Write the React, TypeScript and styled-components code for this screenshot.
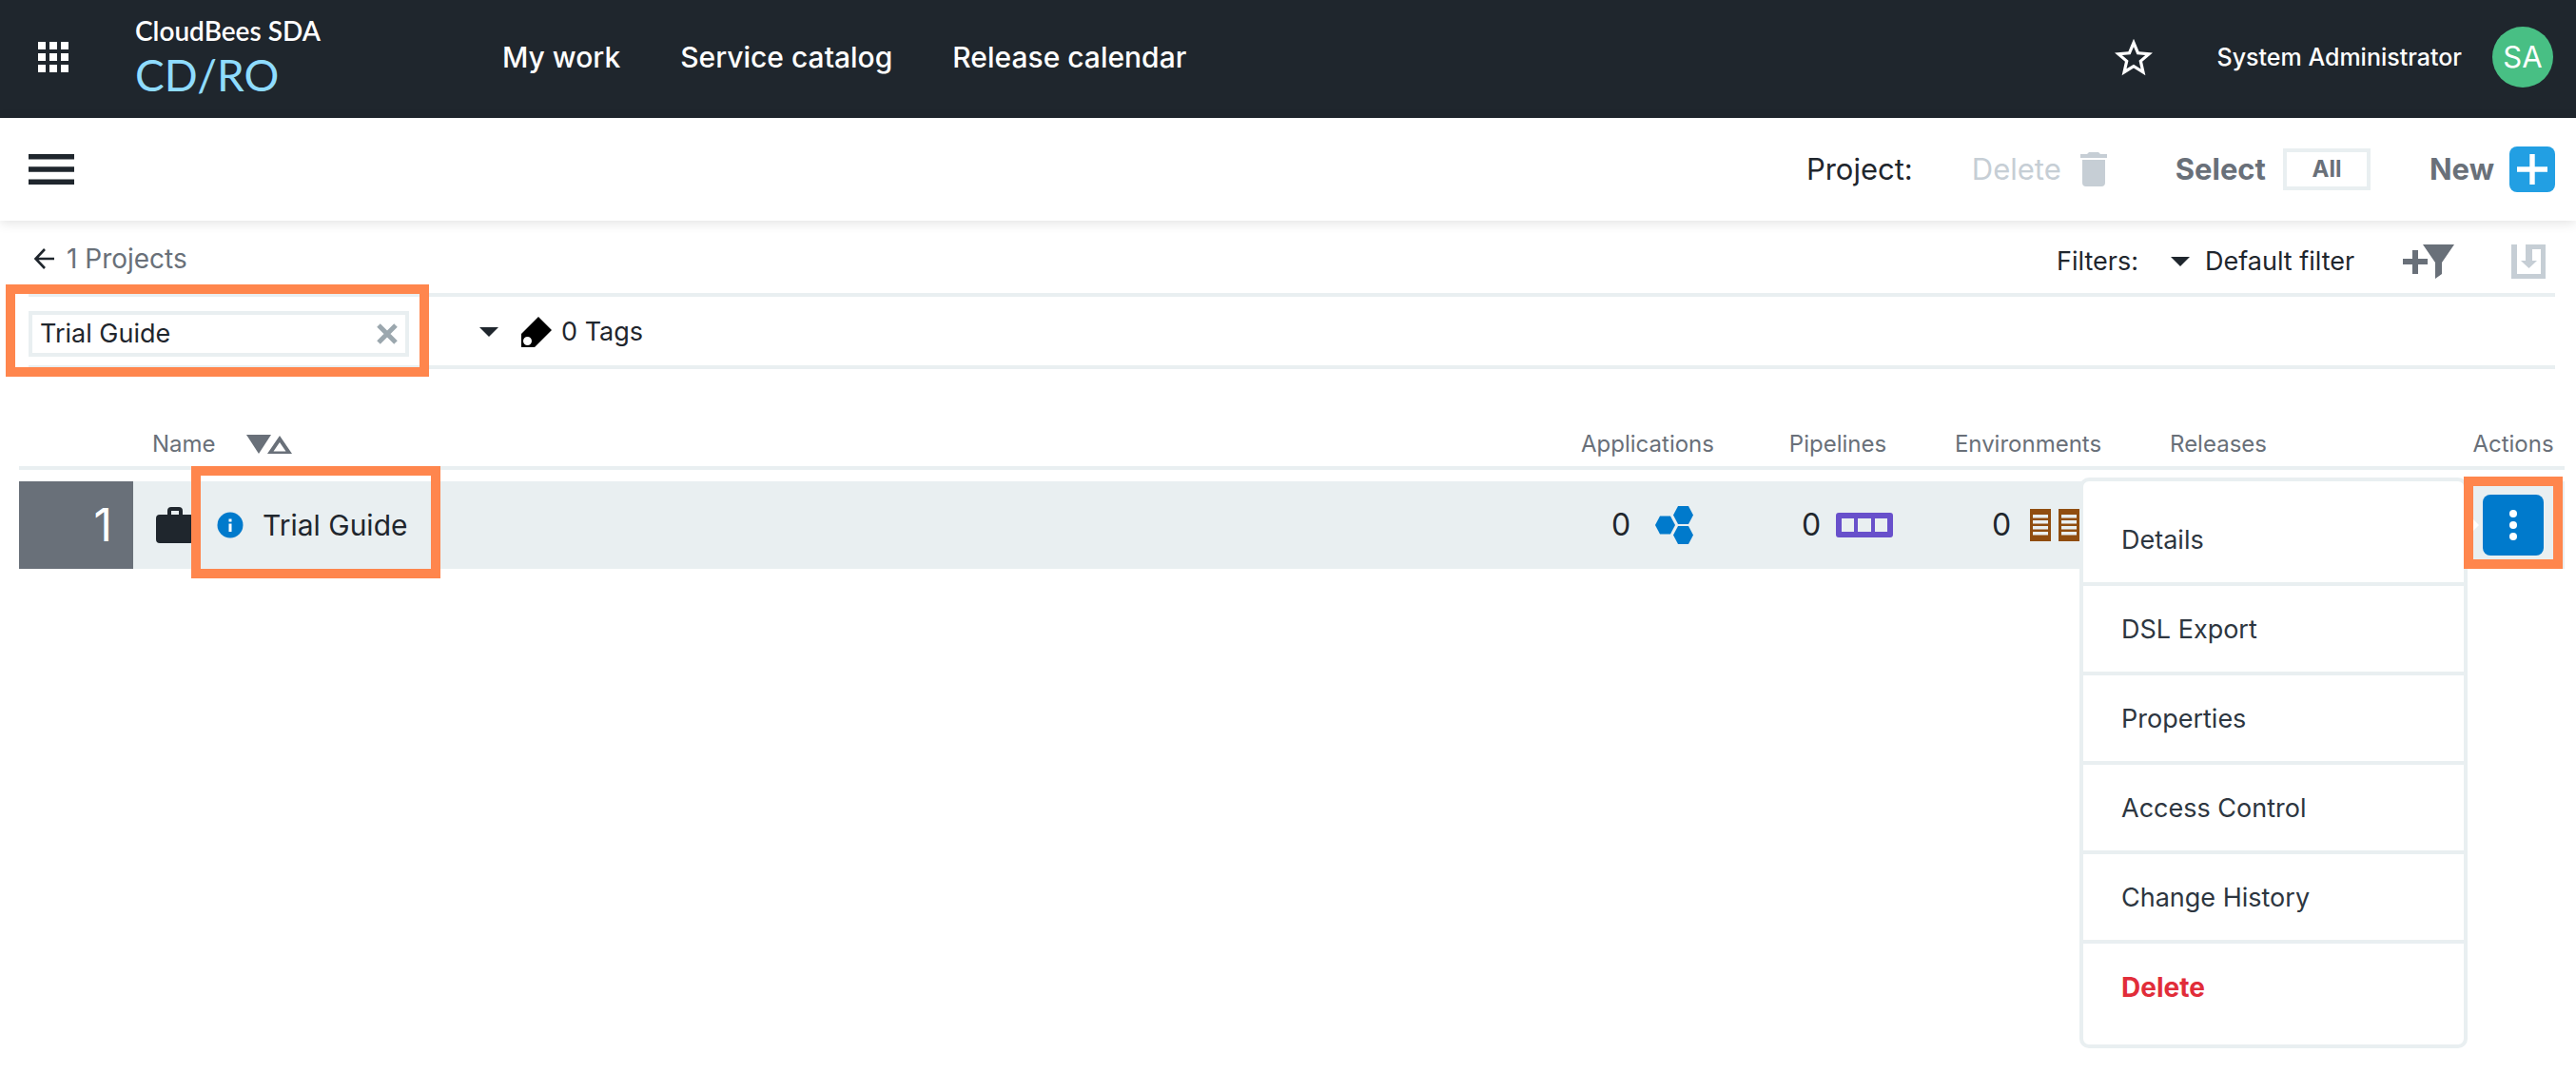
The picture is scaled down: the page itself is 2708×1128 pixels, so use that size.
import React from 'react';
import styled, { createGlobalStyle } from 'styled-components';

const color = {
  ink: '#1f262d',
  muted: '#697079',
  faint: '#c6ced5',
  line: '#e9eff1',
  blue: '#007acc',
  marker: '#ff864d',
};

const GlobalStyle = createGlobalStyle`
  *, *::before, *::after { box-sizing: border-box; }
  body {
    margin: 0;
    background: #fff;
    color: ${color.ink};
    font-family: Inter, "Liberation Sans", sans-serif;
    font-size: 27px;
    line-height: 36px;
  }
  button, input, select { font: inherit; color: inherit; }
  svg { display: block; flex: none; }
`;

const Page = styled.div`
  min-height: 100vh;
`;

const PlainButton = styled.button`
  display: flex;
  align-items: center;
  padding: 0;
  border: 0;
  background: none;
  cursor: pointer;
`;

/* Top bar */
const TopBar = styled.header`
  display: flex;
  align-items: center;
  height: 124px;
  padding: 0 24px 4px 40px;
  background: ${color.ink};
  color: #fff;
`;

const Brand = styled.a`
  display: flex;
  flex-direction: column;
  width: 386px;
  margin-left: 70px;
  padding-top: 6px;
  color: #fff;
  font-family: Lato, sans-serif;
  font-size: 28px;
  font-weight: 600;
  line-height: 32px;
  text-decoration: none;
`;

const Product = styled.span`
  color: #8fdcff;
  font-size: 46px;
  font-weight: 400;
  line-height: 62px;
`;

const Nav = styled.nav`
  display: flex;
  flex: 1;
  gap: 63px;
`;

const NavLink = styled.a`
  color: #fff;
  font-size: 30px;
  font-weight: 500;
  line-height: 40px;
  text-decoration: none;
`;

const User = styled.div`
  display: flex;
  align-items: center;
  font-size: 25px;
  font-weight: 500;
`;

const UserName = styled.span`
  margin: 0 32px 0 68px;
`;

const Avatar = styled.span`
  display: flex;
  align-items: center;
  justify-content: center;
  width: 64px;
  height: 64px;
  border-radius: 50%;
  background: #48bf84;
  font-size: 31px;
  font-weight: 400;
`;

/* Toolbar */
const Toolbar = styled.div`
  display: flex;
  align-items: center;
  justify-content: space-between;
  height: 108px;
  padding: 0 22px 0 30px;
  box-shadow: 0 2px 12px rgba(0, 0, 0, 0.12);
`;

const Tools = styled.div`
  display: flex;
  align-items: center;
  font-size: 31px;
  line-height: 40px;
`;

const DeleteTool = styled(PlainButton)`
  gap: 20px;
  margin: 0 72px 0 62px;
  color: ${color.faint};
`;

const SelectTool = styled.div`
  display: flex;
  align-items: center;
  gap: 18px;
  margin-right: 62px;
  color: ${color.muted};
  font-weight: 700;
`;

const AllButton = styled.button`
  width: 92px;
  height: 44px;
  padding: 0;
  border: 4px solid ${color.line};
  background: #fff;
  color: ${color.muted};
  font-size: 24px;
  font-weight: 700;
  line-height: 32px;
`;

const NewTool = styled(PlainButton)`
  gap: 16px;
  color: ${color.muted};
  font-weight: 700;
`;

const PlusBox = styled.span`
  display: flex;
  align-items: center;
  justify-content: center;
  width: 48px;
  height: 48px;
  border-radius: 8px;
  background: #229fe3;
`;

/* Breadcrumb and search strips */
const Strip = styled.div`
  display: flex;
  align-items: center;
  margin: 0 22px 0 30px;
  border-bottom: 4px solid ${color.line};
`;

const CrumbStrip = styled(Strip)`
  justify-content: space-between;
  height: 80px;
  padding: 4px 10px 0 4px;
`;

const Back = styled.a`
  display: flex;
  align-items: center;
  gap: 12px;
  color: ${color.muted};
  font-size: 28px;
  text-decoration: none;
`;

const Filters = styled.div`
  display: flex;
  align-items: center;
  padding-top: 6px;
`;

const FilterPick = styled.span`
  display: flex;
  align-items: center;
  gap: 16px;
  margin: 0 50px 0 34px;
`;

const FilterSelect = styled.select`
  padding: 0;
  border: 0;
  background: none;
  appearance: none;
`;

const SaveButton = styled(PlainButton)`
  margin-left: 60px;
`;

const SearchStrip = styled(Strip)`
  height: 76px;
  padding-top: 6px;
`;

const SearchBox = styled.div`
  position: relative;
  display: flex;
  align-items: center;
  width: 400px;
  height: 48px;
  padding: 0 8px;
  border: 4px solid ${color.line};
`;

const SearchInput = styled.input`
  flex: 1;
  min-width: 0;
  padding: 0;
  border: 0;
  outline: 0;
  background: none;
`;

const Tags = styled(PlainButton)`
  gap: 10px;
  margin-left: 74px;
  padding-bottom: 4px;
`;

const TagsIcon = styled.span`
  margin-left: 14px;
`;

/* Orange frame drawn round a part of the page */
const Marker = styled.span<{ $inset: string }>`
  position: absolute;
  inset: ${(p) => p.$inset};
  z-index: 3;
  border: 10px solid ${color.marker};
  pointer-events: none;
`;

/* Projects table */
const TableArea = styled.main`
  padding: 64px 12px 24px 20px;
`;

const Table = styled.table`
  width: 100%;
  border-spacing: 0;
  table-layout: fixed;

  tbody::before {
    content: '';
    display: block;
    height: 12px;
  }
`;

const Head = styled.th<{ $width?: number; $align?: string }>`
  width: ${(p) => (p.$width ? `${p.$width}px` : 'auto')};
  padding: 0 0 8px;
  border-bottom: 4px solid ${color.line};
  color: ${color.muted};
  font-size: 24px;
  font-weight: 400;
  line-height: 30px;
  text-align: ${(p) => p.$align ?? 'center'};
`;

const SortButton = styled(PlainButton)`
  gap: 32px;
  margin-left: 20px;
`;

const Cell = styled.td`
  position: relative;
  height: 92px;
  padding: 0;
  background: ${color.line};
`;

const NumberCell = styled(Cell)`
  padding-right: 22px;
  background: ${color.muted};
  color: #fff;
  font-size: 48px;
  text-align: right;
`;

const NameBox = styled.div`
  display: flex;
  align-items: center;
  gap: 24px;
  height: 92px;
  padding-left: 24px;
`;

const NameLink = styled.a`
  position: relative;
  display: flex;
  align-items: center;
  gap: 20px;
  height: 92px;
  color: ${color.ink};
  font-size: 30px;
  text-decoration: none;
`;

const Count = styled.div`
  display: flex;
  align-items: center;
  gap: 16px;
  padding-left: 62px;
  font-size: 32px;
`;

const IconSlot = styled.span`
  display: flex;
  justify-content: center;
  width: 60px;
`;

const MoreButton = styled(PlainButton)`
  justify-content: center;
  width: 64px;
  height: 64px;
  margin: 0 auto;
  border-radius: 8px;
  background: ${color.blue};
`;

const Menu = styled.ul`
  position: absolute;
  top: -4px;
  right: 102px;
  z-index: 2;
  width: 408px;
  margin: 0;
  padding: 16px 0;
  border: 4px solid ${color.line};
  border-radius: 10px;
  background: #fff;
  list-style: none;
`;

const MenuArrow = styled.span`
  position: absolute;
  top: 40px;
  left: 12px;
  border: 6px solid transparent;
  border-left-color: #fff;
`;

const MenuItem = styled.li`
  & + & {
    border-top: 4px solid ${color.line};
  }
`;

const MenuButton = styled(PlainButton)<{ $danger?: boolean }>`
  width: 100%;
  height: 90px;
  padding: 2px 0 0 40px;
  color: ${(p) => (p.$danger ? '#e12d39' : '#2d3640')};
  font-size: ${(p) => (p.$danger ? 28 : 27)}px;
  font-weight: ${(p) => (p.$danger ? 700 : 400)};
`;

const Caret = () => (
  <svg width="20" height="10" viewBox="0 0 20 10" aria-hidden="true">
    <path d="M0 0h20L10 10z" fill={color.ink} />
  </svg>
);

const AppsIcon = () => (
  <svg width="32" height="32" viewBox="0 0 32 32" fill="#fff" aria-hidden="true">
    {[0, 12, 24].map((y) => [0, 12, 24].map((x) => <rect key={`${x}-${y}`} x={x} y={y} width="8" height="8" />))}
  </svg>
);

const StarIcon = () => (
  <svg width="40" height="40" viewBox="0 0 24 24" fill="#fff" aria-hidden="true">
    <path d="M24 9.24l-8.63-.74L12 .5 8.63 8.51 0 9.24l6.55 5.67L4.58 23.5 12 18.94l7.42 4.56-1.96-8.59L24 9.24zM12 16.7l-4.51 2.72 1.2-5.13-3.98-3.45 5.25-.45L12 5.55l2.05 4.85 5.25.45-3.98 3.45 1.2 5.13L12 16.7z" />
  </svg>
);

const HamburgerIcon = () => (
  <svg width="48" height="32" viewBox="0 0 48 32" fill={color.ink} aria-hidden="true">
    <path d="M0 0h48v5.4H0zM0 13.3h48v5.4H0zM0 26.6h48V32H0z" />
  </svg>
);

const TrashIcon = () => (
  <svg width="28" height="36" viewBox="0 0 28 36" fill={color.faint} aria-hidden="true">
    <path d="M0 2h7l2-2h10l2 2h7v4H0zM2 8h24v24a4 4 0 0 1-4 4H6a4 4 0 0 1-4-4z" />
  </svg>
);

const PlusIcon = () => (
  <svg width="32" height="32" viewBox="0 0 32 32" fill="#fff" aria-hidden="true">
    <path d="M13.3 0h5.4v13.3H32v5.4H18.7V32h-5.4V18.7H0v-5.4h13.3z" />
  </svg>
);

const ArrowLeft = () => (
  <svg width="24" height="22" viewBox="0 0 24 22" fill="none" stroke={color.ink} strokeWidth="2.6" aria-hidden="true">
    <path d="M23 11H4M13 1L3.500 11 13 21" />
  </svg>
);

const AddFilterIcon = () => (
  <svg width="54" height="36" viewBox="0 0 54 36" fill={color.muted} aria-hidden="true">
    <path d="M10 6h6v9h10v6H16v10h-6V21H0v-6h10z" />
    <path d="M21 0h33L41 19v12l-7 5V19z" />
  </svg>
);

const SaveIcon = () => (
  <svg width="36" height="36" viewBox="0 0 36 36" fill={color.faint} aria-hidden="true">
    <path d="M0 0h6v31h25V5h-9v12h5l-8.500 8-8.500-8h5V0H36v36H0z" />
  </svg>
);

const ClearIcon = () => (
  <svg width="22" height="22" viewBox="0 0 22 22" stroke="#9ba7ae" strokeWidth="5" aria-hidden="true">
    <path d="M2 2l18 18M20 2L2 20" />
  </svg>
);

const TagIcon = () => (
  <svg width="32" height="32" viewBox="0 0 32 32" aria-hidden="true">
    <path fillRule="evenodd" d="M18 0l14 14-18 18H0V18zM6.500 21a4.500 4.500 0 1 0 0 9 4.500 4.500 0 0 0 0-9z" />
  </svg>
);

const SortIcon = () => (
  <svg width="48" height="20" viewBox="0 0 48 20" aria-hidden="true">
    <path d="M0 0h26L13 20z" fill={color.muted} />
    <path fillRule="evenodd" d="M35 1l13 19H22zM35 8l-6.500 9.500h13z" fill={color.muted} />
  </svg>
);

const BriefcaseIcon = () => (
  <svg width="40" height="38" viewBox="0 0 40 38" aria-hidden="true">
    <path
      fillRule="evenodd"
      d="M12 8V4a4 4 0 0 1 4-4h8a4 4 0 0 1 4 4v4h8a4 4 0 0 1 4 4v22a4 4 0 0 1-4 4H4a4 4 0 0 1-4-4V12a4 4 0 0 1 4-4zM16 4v4h8V4z"
      fill={color.ink}
    />
  </svg>
);

const InfoIcon = () => (
  <svg width="28" height="28" viewBox="0 0 28 28" aria-hidden="true">
    <circle cx="14" cy="14" r="13.500" fill={color.blue} />
    <path d="M12.500 7.500h3v3h-3zM12.500 12.500h3v8.500h-3z" fill="#fff" />
  </svg>
);

const ApplicationsIcon = () => (
  <svg width="40" height="40" viewBox="0 0 40 40" fill={color.blue} aria-hidden="true">
    <path d="M5 10.500h11l5 9.500-5 9.500H5L0 20z" />
    <path d="M24 0h11l5 9.500-5 9.500H24l-5-9.500z" />
    <path d="M24 21h11l5 9.500-5 9.500H24l-5-9.500z" />
  </svg>
);

const PipelinesIcon = () => (
  <svg width="60" height="26" viewBox="0 0 60 26" aria-hidden="true">
    <path
      fillRule="evenodd"
      d="M3 0h54a3 3 0 0 1 3 3v20a3 3 0 0 1-3 3H3a3 3 0 0 1-3-3V3a3 3 0 0 1 3-3zM6 6v14h13V6zM23 6v14h14V6zM41 6v14h13V6z"
      fill="#6850cb"
    />
  </svg>
);

const EnvironmentsIcon = () => (
  <svg width="52" height="34" viewBox="0 0 52 34" aria-hidden="true">
    {[0, 30].map((x) => (
      <g key={x}>
        <rect x={x} width="22" height="34" fill="#904d10" />
        {[6, 12, 18, 24].map((y) => (
          <rect key={y} x={x + 3} y={y} width="16" height="3.500" fill={color.line} />
        ))}
      </g>
    ))}
  </svg>
);

const DotsIcon = () => (
  <svg width="8" height="32" viewBox="0 0 8 32" fill="#fff" aria-hidden="true">
    <circle cx="4" cy="4" r="4" />
    <circle cx="4" cy="16" r="4" />
    <circle cx="4" cy="28" r="4" />
  </svg>
);

const navItems = ['My work', 'Service catalog', 'Release calendar'];
const menuItems = ['Details', 'DSL Export', 'Properties', 'Access Control', 'Change History'];
const counts = [
  { name: 'Applications', Icon: ApplicationsIcon },
  { name: 'Pipelines', Icon: PipelinesIcon },
  { name: 'Environments', Icon: EnvironmentsIcon },
];

export default function App() {
  return (
    <Page>
      <GlobalStyle />
      <TopBar>
        <PlainButton aria-label="Products">
          <AppsIcon />
        </PlainButton>
        <Brand href="#home">
          CloudBees SDA
          <Product>CD/RO</Product>
        </Brand>
        <Nav>
          {navItems.map((item) => (
            <NavLink key={item} href="#nav">
              {item}
            </NavLink>
          ))}
        </Nav>
        <User>
          <PlainButton aria-label="Favorites">
            <StarIcon />
          </PlainButton>
          <UserName>System Administrator</UserName>
          <Avatar>SA</Avatar>
        </User>
      </TopBar>

      <Toolbar>
        <PlainButton aria-label="Main menu">
          <HamburgerIcon />
        </PlainButton>
        <Tools>
          <span>Project:</span>
          <DeleteTool disabled>
            Delete
            <TrashIcon />
          </DeleteTool>
          <SelectTool>
            Select
            <AllButton>All</AllButton>
          </SelectTool>
          <NewTool>
            New
            <PlusBox>
              <PlusIcon />
            </PlusBox>
          </NewTool>
        </Tools>
      </Toolbar>

      <CrumbStrip>
        <Back href="#back">
          <ArrowLeft />
          1 Projects
        </Back>
        <Filters>
          <label htmlFor="filter">Filters:</label>
          <FilterPick>
            <Caret />
            <FilterSelect id="filter">
              <option>Default filter</option>
            </FilterSelect>
          </FilterPick>
          <PlainButton aria-label="Add filter">
            <AddFilterIcon />
          </PlainButton>
          <SaveButton aria-label="Save filter">
            <SaveIcon />
          </SaveButton>
        </Filters>
      </CrumbStrip>

      <SearchStrip>
        <SearchBox>
          <SearchInput aria-label="Search projects" defaultValue="Trial Guide" />
          <PlainButton aria-label="Clear search">
            <ClearIcon />
          </PlainButton>
          <Marker $inset="-32px -25px -25px -28px" />
        </SearchBox>
        <Tags aria-haspopup="listbox">
          <Caret />
          <TagsIcon>
            <TagIcon />
          </TagsIcon>
          0 Tags
        </Tags>
      </SearchStrip>

      <TableArea>
        <Table>
          <thead>
            <tr>
              <Head $width={120} />
              <Head $align="left">
                <SortButton>
                  Name
                  <SortIcon />
                </SortButton>
              </Head>
              {counts.map(({ name }) => (
                <Head key={name} $width={200}>
                  {name}
                </Head>
              ))}
              <Head $width={200}>Releases</Head>
              <Head $width={156} />
              <Head $width={108}>Actions</Head>
            </tr>
          </thead>
          <tbody>
            <tr>
              <NumberCell>1</NumberCell>
              <Cell>
                <NameBox>
                  <BriefcaseIcon />
                  <NameLink href="#project">
                    <InfoIcon />
                    Trial Guide
                    <Marker $inset="-16px -34px -10px -27px" />
                  </NameLink>
                </NameBox>
              </Cell>
              {counts.map(({ name, Icon }) => (
                <Cell key={name}>
                  <Count>
                    0
                    <IconSlot>
                      <Icon />
                    </IconSlot>
                  </Count>
                </Cell>
              ))}
              <Cell />
              <Cell />
              <Cell>
                <MenuArrow />
                <MoreButton aria-label="Actions" aria-haspopup="menu" aria-expanded="true">
                  <DotsIcon />
                </MoreButton>
                <Marker $inset="-5px 2px 0 2px" />
                <Menu>
                  {menuItems.map((item) => (
                    <MenuItem key={item}>
                      <MenuButton>{item}</MenuButton>
                    </MenuItem>
                  ))}
                  <MenuItem>
                    <MenuButton $danger>Delete</MenuButton>
                  </MenuItem>
                </Menu>
              </Cell>
            </tr>
          </tbody>
        </Table>
      </TableArea>
    </Page>
  );
}
